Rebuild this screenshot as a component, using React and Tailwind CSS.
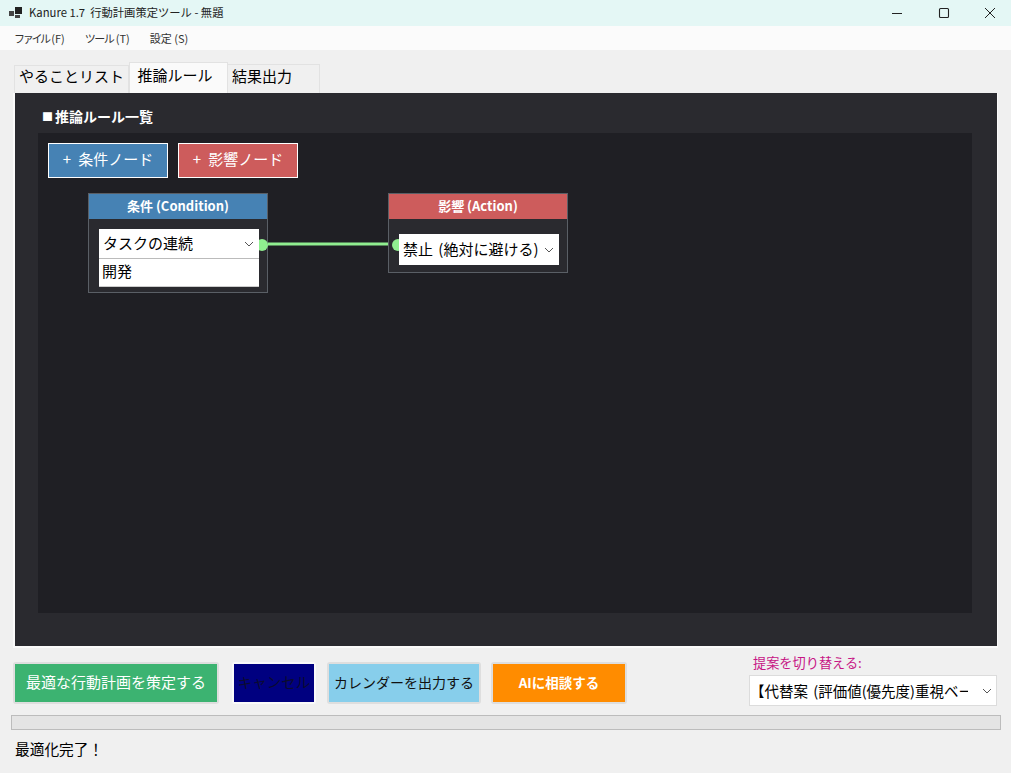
const FONT = "font-['Noto_Sans_CJK_JP','Noto_Sans',sans-serif]";

function Chevron({ className = "" }) {
  return (
    <svg width="10" height="6" viewBox="0 0 10 6" fill="none" className={className}>
      <path d="M1 1l4 4 4-4" stroke="#555" strokeWidth="1" />
    </svg>
  );
}

function ActionButton({ children, className, outer = "border-[#dedede]", width }) {
  return (
    <div className={`${width} h-[42px] rounded-[3px] border-2 ${outer} flex shrink-0`}>
      <div className={`flex-1 flex items-center justify-center pb-[2px] whitespace-nowrap ${className}`}>{children}</div>
    </div>
  );
}

export default function App() {
  return (
    <div className={`w-[1011px] h-[773px] bg-[#f0f0f0] flex flex-col overflow-hidden text-black ${FONT}`}>
      {/* Title bar */}
      <div className="h-[26px] bg-[#e4f7f5] flex items-center shrink-0">
        <svg width="14" height="12" viewBox="0 0 14 12" className="ml-[9px] mr-[6px]">
          <rect x="0" y="4" width="5" height="5" fill="#444" />
          <rect x="6" y="0" width="7" height="7" fill="#222" />
          <rect x="6" y="8" width="5" height="3" fill="#444" />
        </svg>
        <span className="text-[11.3px] leading-none text-[#222]">Kanure 1.7&nbsp; 行動計画策定ツール - 無題</span>
        <div className="ml-auto flex items-center">
          <svg width="12" height="12" viewBox="0 0 12 12" className="mr-[35px]"><path d="M1 6.5h10" stroke="#222" strokeWidth="1" /></svg>
          <svg width="12" height="12" viewBox="0 0 12 12" className="mr-[34px]"><rect x="1.5" y="1.5" width="9" height="9" rx="1" fill="none" stroke="#222" strokeWidth="1.1" /></svg>
          <svg width="12" height="12" viewBox="0 0 12 12" className="mr-[15px]"><path d="M1 1l10 10M11 1L1 11" stroke="#222" strokeWidth="1" /></svg>
        </div>
      </div>

      {/* Menu */}
      <div className="h-[24px] bg-[#fbfbfb] flex items-center shrink-0 pl-[14px] gap-[20px] text-[11px] text-[#333]">
        <span><span className="tracking-[-2.3px]">ファイル</span>&nbsp;(F)</span>
        <span><span className="tracking-[-1.5px]">ツール</span>&nbsp;(T)</span>
        <span>設定&nbsp;(S)</span>
      </div>

      {/* Tabs */}
      <div className="h-[43px] flex items-end pl-[14px] shrink-0">
        <div className="w-[115px] h-[28px] bg-[#f0f0f0] border border-b-0 border-[#e2e2e2] flex items-center justify-center pb-[8px] text-[15px] leading-none">やることリスト</div>
        <div className="w-[99px] h-[31px] bg-[#fafafa] border border-b-0 border-[#e2e2e2] flex items-start pt-[2px] pr-[7px] justify-center text-[15px] leading-[20px]">推論ルール</div>
        <div className="w-[92px] h-[29px] bg-[#f0f0f0] border border-b-0 border-l-0 border-[#e2e2e2] flex items-center pl-[4px] pb-[7px] text-[15px] leading-none">結果出力</div>
      </div>

      {/* Panel */}
      <div className="mx-[13px] h-[555px] bg-[#fafafa] pl-[2px] pr-[1px] pb-[2px] shrink-0 flex">
        <div className="flex-1 bg-[#2a2a2f] flex flex-col pl-[23px] pr-[25px]">
          <div className="h-[40px] flex items-center pl-[4px] pt-[7px] text-white text-[14px] font-bold">
            <span className="text-[11px] mr-[2px]">■</span>推論ルール一覧
          </div>
          <div className="relative h-[480px] bg-[#1f1f24]">
            <div className="flex gap-[10px] pl-[10px] pt-[10px]">
              <div className="w-[120px] h-[35px] bg-[#4682b4] border border-white text-white text-[15px] flex items-center justify-center gap-[7px] pb-[3px]"><span>+</span><span>条件ノード</span></div>
              <div className="w-[120px] h-[35px] bg-[#cd5c5c] border border-white text-white text-[15px] flex items-center justify-center gap-[7px] pb-[3px]"><span>+</span><span>影響ノード</span></div>
            </div>

            {/* Wire */}
            <svg className="absolute left-[220px] top-[100px]" width="140" height="20" viewBox="0 0 140 20">
              <path d="M0 11H140" stroke="#90ee90" strokeWidth="3" fill="none" />
            </svg>

            {/* Condition node */}
            <div className="absolute left-[50px] top-[60px] w-[180px] h-[100px] bg-[#2a2a2f] border border-[#5a5f66]">
              <div className="h-[25px] bg-[#4682b4] text-white text-[13px] font-bold flex items-center justify-center pb-[2px]">条件 (Condition)</div>
              <div className="absolute left-[167px] top-[45px] w-[12px] h-[12px] rounded-full bg-[#90ee90]"></div>
              <div className="absolute left-[10px] top-[35px] w-[160px] h-[30px] bg-white border-b border-[#bbb] flex items-center pl-[4px] pr-[5px] text-[15px]">
                <span>タスクの連続</span>
                <Chevron className="ml-auto" />
              </div>
              <div className="absolute left-[10px] top-[65px] w-[160px] h-[28px] bg-white border-b border-[#ccc] flex items-center pl-[3px] pb-[2px] text-[15px]">開発</div>
            </div>

            {/* Action node */}
            <div className="absolute left-[350px] top-[60px] w-[180px] h-[80px] bg-[#2a2a2f] border border-[#5a5f66]">
              <div className="h-[25px] bg-[#cd5c5c] text-white text-[13px] font-bold flex items-center justify-center pb-[2px]">影響 (Action)</div>
              <div className="absolute left-[3px] top-[45px] w-[12px] h-[12px] rounded-full bg-[#90ee90]"></div>
              <div className="absolute left-[10px] top-[40px] w-[160px] h-[31px] bg-white flex items-center pl-[4px] pr-[5px] text-[15px]">
                <span className="w-[137px] overflow-hidden whitespace-nowrap [word-spacing:2px]">禁止 (絶対に避ける)</span>
                <Chevron className="ml-auto" />
              </div>
            </div>
          </div>
        </div>
      </div>

      {/* Action row */}
      <div className="h-[69px] flex items-start shrink-0 pl-[13px]">
        <div className="flex pt-[14px]">
          <ActionButton width="w-[206px]" className="bg-[#3cb371] text-white text-[15px]">最適な行動計画を策定する</ActionButton>
          <ActionButton width="w-[84px] ml-[13px]" outer="border-[#fafafa]" className="bg-[#000080] text-[#0b0b30] text-[14.5px]">キャンセル</ActionButton>
          <ActionButton width="w-[154px] ml-[11px]" className="bg-[#87ceeb] text-[#111] text-[14px]">カレンダーを出力する</ActionButton>
          <ActionButton width="w-[136px] ml-[10px]" className="bg-[#ff8c00] text-white text-[13.5px] font-bold">AIに相談する</ActionButton>
        </div>
        <div className="ml-auto mr-[14px] w-[248px] pt-[5px] flex flex-col">
          <span className="text-[13.2px] leading-[20px] text-[#c71585] pl-[4px]">提案を切り替える:</span>
          <div className="mt-[2px] h-[31px] bg-white border border-[#dcdcdc] flex items-center pr-[4px] text-[14.5px]">
            <span className="w-[218px] overflow-hidden whitespace-nowrap [word-spacing:2px]">【代替案 (評価値(優先度)重視ベース)】</span>
            <Chevron className="ml-auto" />
          </div>
        </div>
      </div>

      {/* Progress */}
      <div className="mx-[11px] mt-[-2px] w-[990px] h-[15px] bg-[#e4e4e4] border border-[#bcbcbc] shrink-0"></div>

      {/* Status */}
      <div className="pl-[15px] mt-[9px] text-[14.7px] leading-[20px]">最適化完了！</div>
    </div>
  );
}
